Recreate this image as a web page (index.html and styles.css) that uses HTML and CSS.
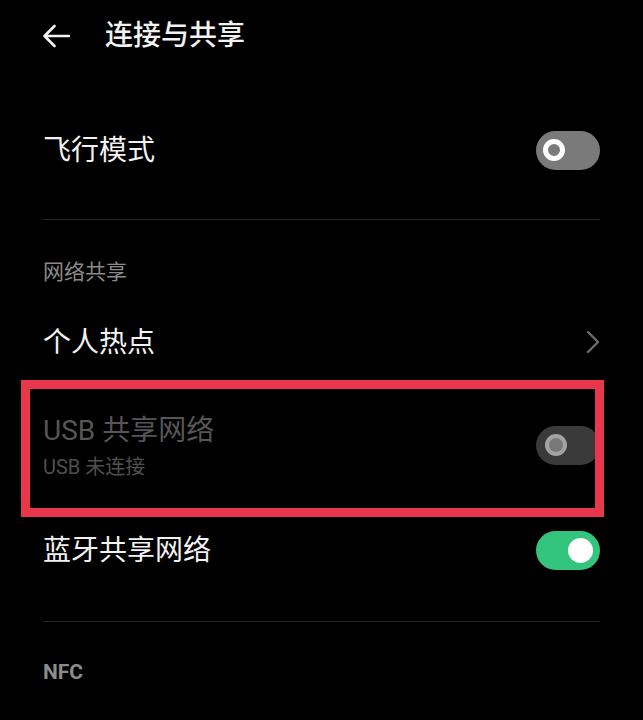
FILE: index.html
```html
<!DOCTYPE html>
<html lang="zh-CN">
<head>
<meta charset="utf-8">
<title>连接与共享</title>
<link rel="stylesheet" href="styles.css">
</head>
<body>
<div class="screen">
  <header class="topbar">
    <svg class="back" width="28" height="24" viewBox="0 0 28 24" aria-hidden="true">
      <path d="M27 12H2.5M12.5 2L2.5 12l10 10" fill="none" stroke="#f2f2f2" stroke-width="2.6" stroke-linecap="round" stroke-linejoin="round"/>
    </svg>
    <h1 class="title">连接与共享</h1>
  </header>

  <main class="list">
    <div class="row row-airplane">
      <span class="label">飞行模式</span>
      <span class="switch switch-off"><span class="knob"></span></span>
    </div>
    <div class="divider divider-1"></div>

    <div class="section section-net">网络共享</div>

    <div class="row row-hotspot">
      <span class="label">个人热点</span>
      <svg class="chevron" width="14" height="24" viewBox="0 0 14 24" aria-hidden="true">
        <path d="M2 2l10 10L2 22" fill="none" stroke="#6c6c6c" stroke-width="2.4" stroke-linecap="round" stroke-linejoin="round"/>
      </svg>
    </div>

    <div class="row row-usb">
      <div class="texts">
        <span class="label label-disabled">USB 共享网络</span>
        <span class="sub">USB 未连接</span>
      </div>
      <span class="switch switch-disabled"><span class="knob"></span></span>
    </div>

    <div class="row row-bt">
      <span class="label">蓝牙共享网络</span>
      <span class="switch switch-on"><span class="knob"></span></span>
    </div>
    <div class="divider divider-2"></div>

    <div class="section section-nfc">NFC</div>
  </main>

  <div class="highlight" aria-hidden="true"></div>
</div>
</body>
</html>
```

FILE: styles.css
```css
* { box-sizing: border-box; }

html, body {
  margin: 0;
  padding: 0;
  background: #000;
}

body {
  font-family: Roboto, "Noto Sans CJK SC", "Noto Sans", sans-serif;
  color: #f2f2f2;
}

.screen {
  position: relative;
  width: 643px;
  height: 720px;
  overflow: hidden;
  background: #000;
}

.topbar {
  height: 72px;
  display: flex;
  align-items: center;
  padding-left: 42px;
  gap: 35px;
}

.back { display: block; flex: none; }

.title {
  margin: 0;
  font-size: 28px;
  font-weight: 500;
  line-height: 36px;
  color: #f2f2f2;
}

.list {
  padding: 38px 43px 0 43px;
  display: flex;
  flex-direction: column;
}

.row {
  height: 80px;
  display: flex;
  align-items: center;
  justify-content: space-between;
}

.label {
  font-size: 28px;
  line-height: 37px;
  color: #f2f2f2;
}

.label-disabled { color: #565656; }

.texts {
  display: flex;
  flex-direction: column;
  margin-top: 7px;
}

.sub {
  font-size: 20px;
  line-height: 37px;
  color: #4f4f4f;
}

.divider {
  height: 1px;
  background: #262626;
}

.divider-1 { margin-top: 29px; }
.divider-2 { margin-top: 31px; }

.section {
  height: 40px;
  display: flex;
  align-items: center;
  font-size: 21px;
  color: #8a8a8a;
}

.section-net { margin-top: 30px; }
.row-hotspot { margin-top: 12px; }
.row-usb { margin-top: 23px; }
.row-bt { margin-top: 25px; }

.section-nfc {
  margin-top: 30px;
  font-weight: 700;
  font-size: 21px;
  color: #8c8c8c;
}

.chevron { display: block; }

.switch {
  position: relative;
  width: 64px;
  height: 39px;
  border-radius: 20px;
  flex: none;
  display: flex;
  align-items: center;
}

.switch-off {
  background: #7a7a7a;
  padding-left: 7px;
}
.switch-off .knob {
  width: 22px;
  height: 22px;
  border-radius: 50%;
  border: 5px solid #ffffff;
  background: #7a7a7a;
}

.switch-disabled {
  background: #3a3a3a;
  padding-left: 9px;
}
.switch-disabled .knob {
  width: 22px;
  height: 22px;
  border-radius: 50%;
  border: 4px solid #a2a2a2;
  background: #787878;
}

.switch-on {
  background: #33c47d;
  justify-content: flex-end;
  padding-right: 7px;
}
.switch-on .knob {
  width: 25px;
  height: 25px;
  border-radius: 50%;
  background: #ffffff;
}

.highlight {
  position: absolute;
  left: 21px;
  top: 380px;
  width: 583px;
  height: 137px;
  border: 9.5px solid #e8374b;
  pointer-events: none;
}
```
